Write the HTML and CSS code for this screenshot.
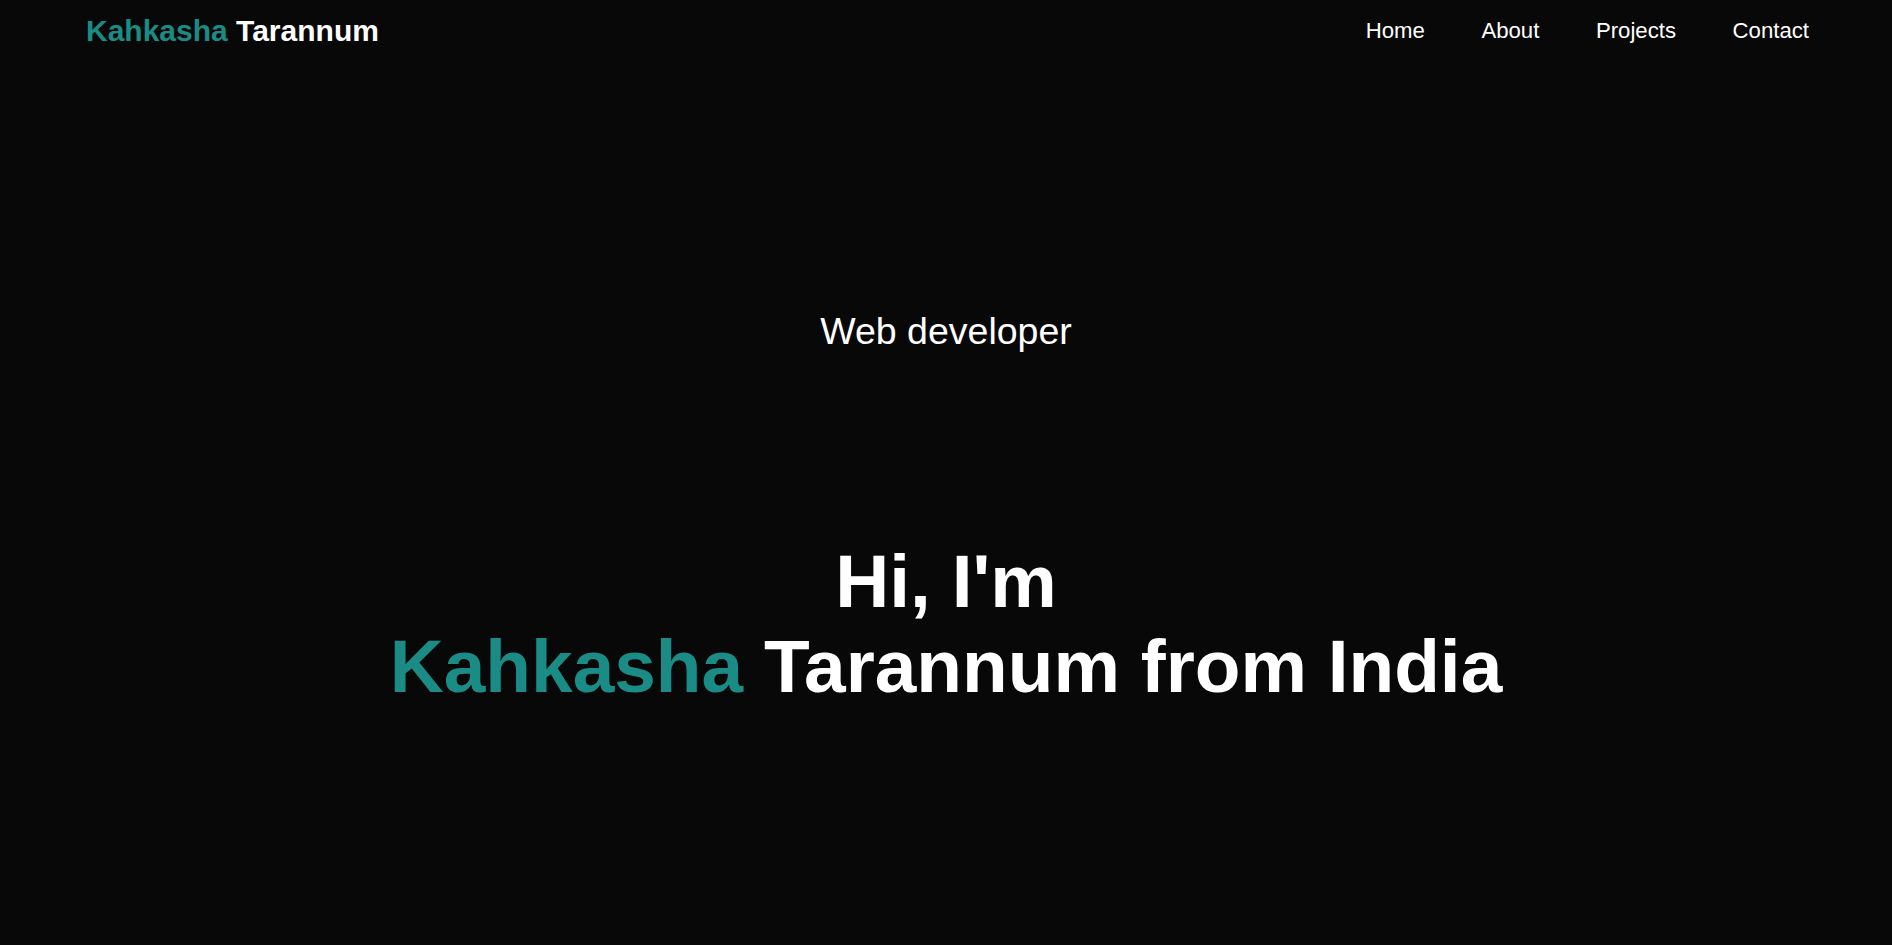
FILE: index.html
```html
<!DOCTYPE html>
<html lang="en">
<head>
<meta charset="utf-8">
<title>Kahkasha Tarannum</title>
<link rel="stylesheet" href="styles.css">
</head>
<body>
<header class="header">
  <a class="logo" href="#"><span class="accent">Kahkasha</span> Tarannum</a>
  <nav class="nav">
    <a href="#">Home</a>
    <a href="#">About</a>
    <a href="#">Projects</a>
    <a href="#">Contact</a>
  </nav>
</header>
<main class="hero">
  <p class="role">Web developer</p>
  <h1 class="title">Hi, I'm<br><span class="accent">Kahkasha</span> Tarannum from India</h1>
</main>
</body>
</html>
```
FILE: styles.css
```css
* { box-sizing: border-box; }
html, body {
  margin: 0;
  padding: 0;
  background: #080808;
  color: #ffffff;
  font-family: "Liberation Sans", Arial, sans-serif;
}
body { height: 945px; overflow: hidden; }
a { color: inherit; text-decoration: none; }
.accent { color: #1a8c85; }
.header {
  display: flex;
  align-items: center;
  justify-content: space-between;
  padding: 14px 83px 14px 86px;
}
.logo {
  font-size: 30px;
  font-weight: bold;
}
.nav {
  display: flex;
  gap: 56.5px;
  font-size: 22.2px;
}
.hero {
  text-align: center;
  padding-top: 248px;
}
.role {
  margin: 0;
  font-size: 37.5px;
}
.title {
  margin: 186px 0 0;
  font-size: 74.8px;
  line-height: 85px;
  font-weight: bold;
}
```
